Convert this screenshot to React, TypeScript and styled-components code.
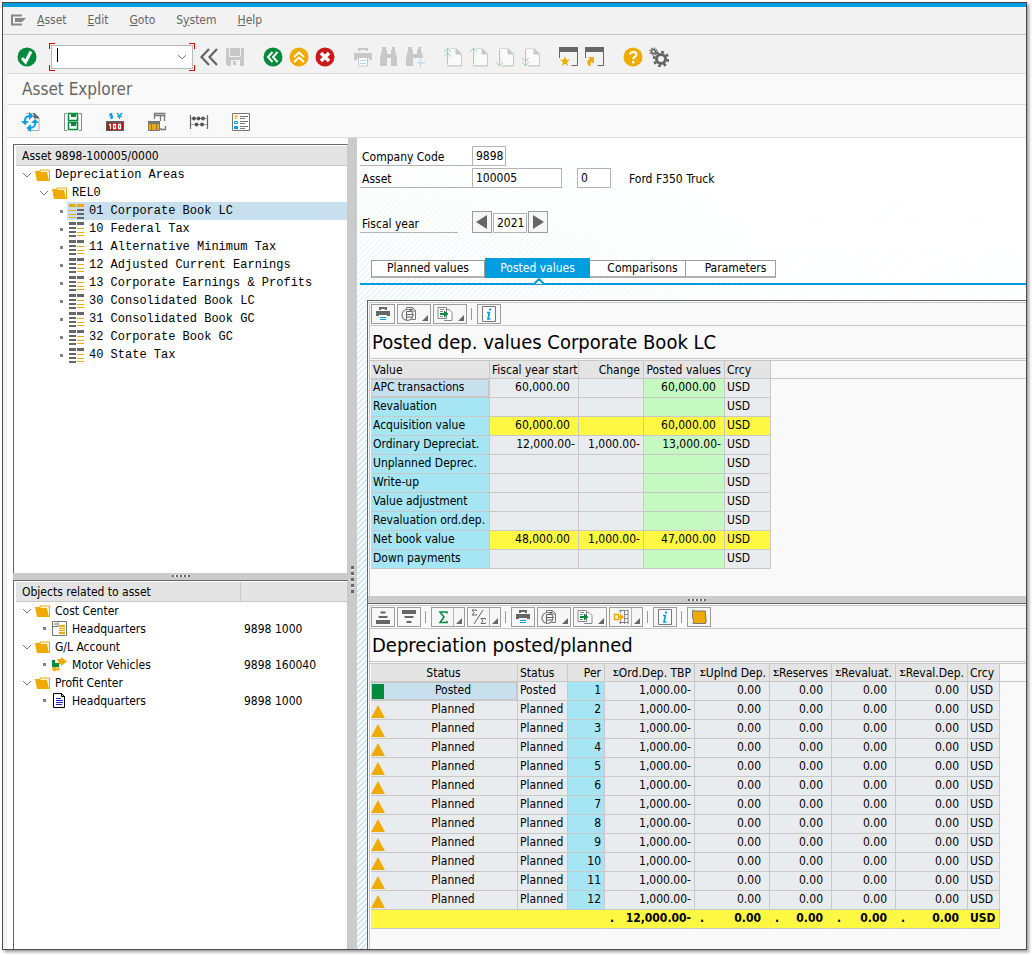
import React from 'react';
import styled, { createGlobalStyle, css } from 'styled-components';

const SANS = '"DejaVu Sans Condensed", "DejaVu Sans", Tahoma, sans-serif';
const MONO = '"Liberation Mono", "Courier New", monospace';
const BLUE = '#009de0';
const LINE = '#c8c8c8';
const DARK = '#666666';
const AMBER = '#f0ab00';
const GREEN = '#008a3b';

const GlobalStyle = createGlobalStyle`
  * { box-sizing: border-box; }
  body {
    margin: 0;
    background: #fff;
    color: #000;
    font-family: ${SANS};
    font-size: 12px;
    line-height: 16px;
  }
  button, input { font: inherit; color: inherit; margin: 0; padding: 0; border-radius: 0; }
  button { background: none; border: 0; }
  svg { display: block; flex: none; }
`;

/* ---------- window ---------- */

const Window = styled.div`
  display: flex;
  flex-direction: column;
  min-height: calc(100vh - 7px);
  margin: 0 5px 5px 2px;
  border: 1px solid #4a4a4a;
  background: #f2f2f2;
  box-shadow: 2px 2px 3px rgba(0, 0, 0, 0.4);
`;

const Page = styled.div`
  padding-top: 2px;
`;

const AccentStrip = styled.div`
  height: 4px;
  background: ${BLUE};
`;

const MenuBar = styled.nav`
  display: flex;
  align-items: center;
  height: 28px;
  padding: 0 0 2px 6px;
  border-bottom: 1px solid #c4c4c4;
  color: ${DARK};
`;

const MenuItems = styled.div`
  display: flex;
  gap: 21px;
  margin-left: 10px;
`;

const MenuItem = styled.button`
  line-height: 18px;
`;

const Body = styled.div`
  display: flex;
  flex-direction: column;
  flex: 1;
  margin-left: 4px;
  background: #fff;
`;

const SystemBar = styled.div`
  display: flex;
  align-items: center;
  gap: 4px;
  height: 39px;
  padding: 5px 0 0 10px;
  border-bottom: 1px solid #dcdcdc;
  background: #f2f2f2;
`;

const IconButton = styled.button`
  display: flex;
  align-items: center;
  justify-content: center;
  width: 20px;
  height: 20px;
`;

const Group = styled.div<{ $before?: number }>`
  display: flex;
  gap: 6px;
  margin-left: ${(p) => p.$before ?? 0}px;
`;

const corner = (pos: string) =>
  `linear-gradient(#e00000, #e00000) ${pos} / 6px 1px no-repeat, linear-gradient(#e00000, #e00000) ${pos} / 1px 6px no-repeat`;

const CommandFrame = styled.div`
  padding: 2px;
  margin: 0 0 0 8px;
  background: ${corner('left top')}, ${corner('right top')}, ${corner('left bottom')}, ${corner('right bottom')};
`;

const CommandBox = styled.div`
  display: flex;
  align-items: center;
  width: 142px;
  height: 24px;
  padding: 0 5px;
  border: 1px solid #b8b8b8;
  background: #fff;
`;

const Caret = styled.span`
  width: 1px;
  height: 14px;
  margin-bottom: 4px;
  background: #000;
`;

const CommandInput = styled.input`
  flex: 1;
  min-width: 0;
  border: 0;
  outline: 0;
  background: transparent;
`;

const TitleBar = styled.h1`
  height: 31px;
  margin: 0;
  padding-left: 15px;
  border-bottom: 1px solid #dcdcdc;
  background: #f9f9f9;
  color: ${DARK};
  font-size: 17px;
  font-weight: 400;
  line-height: 30px;
`;

const AppBar = styled.div`
  display: flex;
  align-items: center;
  gap: 22px;
  height: 33px;
  padding: 1px 0 0 14px;
  border-bottom: 1px solid #dcdcdc;
  background: #f9f9f9;
`;

/* ---------- split layout ---------- */

const Workspace = styled.main`
  display: flex;
  flex: 1;
`;

const LeftPane = styled.div`
  display: flex;
  flex-direction: column;
  flex: none;
  width: 341px;
  padding: 6px 0 0 6px;
`;

const TreePanel = styled.section<{ $grow: number }>`
  display: flex;
  flex-direction: column;
  flex: ${(p) => p.$grow} 1 auto;
  height: 0;
  border-top: 1px solid ${DARK};
  border-left: 1px solid ${DARK};
  border-right: 1px solid ${LINE};
  padding: 1px 0 0 2px;
`;

const TreeHeader = styled.div`
  display: grid;
  grid-template-columns: 225px 1fr;
  height: 20px;
  border-bottom: 1px solid ${LINE};
  background: #e4e4e4;
  line-height: 20px;
`;

const TreeHeaderCell = styled.h2<{ $span?: boolean }>`
  margin: 0;
  padding-left: 6px;
  font: inherit;
  ${(p) => p.$span ? 'grid-column: 1 / 3;' : `border-right: 1px solid ${LINE};`}
`;

const TreeList = styled.ul<{ $mono?: boolean }>`
  margin: 0;
  padding: 0;
  list-style: none;
  ${(p) => p.$mono && `font-family: ${MONO};`}
`;

const TreeRow = styled.li<{ $level: number }>`
  display: grid;
  grid-template-columns: ${(p) => 17 + p.$level * 17}px 1fr;
  height: 18px;
  line-height: 18px;
  white-space: nowrap;
`;

const TreeMarker = styled.span`
  display: flex;
  align-items: center;
  justify-content: flex-end;
  padding-right: 1px;
`;

const TreeBullet = styled.i`
  width: 3px;
  height: 3px;
  margin-right: 3px;
  background: #808080;
`;

const TreeItem = styled.span<{ $selected?: boolean; $indent: number }>`
  display: grid;
  grid-template-columns: ${(p) => 209 - p.$indent}px 1fr;
  padding-left: 2px;
  background: ${(p) => (p.$selected ? '#c8e0ed' : 'transparent')};
`;

const TreeText = styled.span`
  display: flex;
  align-items: center;
  gap: 5px;
`;

const Splitter = styled.div<{ $vertical?: boolean }>`
  display: flex;
  align-items: center;
  justify-content: center;
  flex: none;
  background: #cbcbcb;
  ${(p) => (p.$vertical ? 'width: 9px;' : 'height: 7px;')}
`;

const Grip = styled.span<{ $vertical?: boolean }>`
  ${(p) =>
    p.$vertical
      ? css`
          width: 3px;
          height: 27px;
          margin-top: 72px;
          background: repeating-linear-gradient(#666 0 3px, #eee 3px 4px, transparent 4px 6px);
        `
      : css`
          width: 18px;
          height: 2px;
          background: repeating-linear-gradient(to right, #666 0 2px, #eee 2px 4px);
        `}
`;

const RightPane = styled.div`
  display: flex;
  flex-direction: column;
  flex: 1;
  min-width: 0;
  background:
    linear-gradient(#fff, rgba(255, 255, 255, 0) 360px),
    linear-gradient(to right, rgba(255, 255, 255, 0), rgba(255, 255, 255, 0.9) 60%),
    repeating-linear-gradient(135deg, #cfe6f2 0 1px, #fff 2px 3px, #cfe6f2 4px);
`;

/* ---------- selection form ---------- */

const Form = styled.form`
  display: flex;
  flex-direction: column;
  gap: 2px;
  padding: 8px 0 0 3px;
`;

const FormRow = styled.div<{ $before?: number }>`
  display: flex;
  align-items: flex-end;
  margin-top: ${(p) => p.$before ?? 0}px;
`;

const FieldLabel = styled.label<{ $short?: boolean }>`
  width: ${(p) => (p.$short ? 98 : 112)}px;
  height: 18px;
  margin-right: ${(p) => (p.$short ? 14 : 0)}px;
  padding-left: 2px;
  border-bottom: 1px solid #b4b4b4;
  line-height: 18px;
`;

const Field = styled.input<{ $w: number; $before?: number }>`
  width: ${(p) => p.$w}px;
  height: 20px;
  margin-left: ${(p) => p.$before ?? 0}px;
  padding: 0 0 1px 3px;
  border: 1px solid #b4b4b4;
  background: #fff;
`;

const FieldText = styled.output`
  height: 20px;
  margin-left: 18px;
  line-height: 22px;
`;

const YearStepper = styled.div`
  display: flex;
  align-items: flex-end;
  gap: 1px;
`;

const StepButton = styled.button`
  display: flex;
  align-items: center;
  justify-content: center;
  width: 20px;
  height: 22px;
  border: 1px solid #9c9c9c;
  background: #f7f7f7;
`;

/* ---------- tabs ---------- */

const TabStrip = styled.div`
  display: flex;
  align-items: flex-end;
  height: 27px;
  margin: 25px 0 0 3px;
  padding: 0 0 5px 11px;
  border-bottom: 2px solid ${BLUE};
`;

const Tab = styled.button<{ $w: number; $active?: boolean; $late?: boolean }>`
  position: relative;
  width: ${(p) => p.$w}px;
  height: 18px;
  padding-left: ${(p) => (p.$late ? 10 : 0)}px;
  border: 1px solid #9c9c9c;
  border-bottom: 2px solid #b0b0b0;
  border-left-width: 0;
  background: #fff;
  line-height: 15px;
  &:first-child { border-left-width: 1px; }
  ${(p) =>
    p.$active &&
    css`
      height: 20px;
      border: 0;
      background: ${BLUE};
      color: #fff;
      line-height: 20px;
    `}
`;

const TabPointer = styled.svg`
  position: absolute;
  left: 48px;
  top: 20px;
`;

/* ---------- result grids ---------- */

const Results = styled.div`
  display: flex;
  flex-direction: column;
  flex: 1;
  margin: 15px 0 0 10px;
  border-left: 1px solid ${DARK};
`;

const GridPanel = styled.section<{ $fill?: boolean }>`
  display: flex;
  flex-direction: column;
  flex: ${(p) => (p.$fill ? '1' : 'none')};
  padding: ${(p) => (p.$fill ? '1px 0 16px 2px' : '1px 0 27px 2px')};
  border-top: 1px solid ${DARK};
  background: linear-gradient(${LINE}, ${LINE}) 1px 1px / 1px 100% no-repeat #f9f9f9;
`;

const GridToolbar = styled.div`
  display: flex;
  align-items: center;
  gap: 2px;
  height: 24px;
  padding-left: 1px;
  border-top: 1px solid ${LINE};
  border-bottom: 1px solid ${LINE};
`;

const ToolButton = styled.button<{ $menu?: boolean }>`
  display: flex;
  align-items: center;
  justify-content: center;
  width: 24px;
  height: 20px;
  border: 1px solid #9c9c9c;
  background: #f7f7f7;
  ${(p) =>
    p.$menu &&
    css`
      width: 34px;
      justify-content: space-between;
      padding: 0 2px 0 3px;
    `}
`;

const MenuPart = styled.span<{ $split?: boolean }>`
  display: flex;
  align-items: flex-end;
  justify-content: flex-end;
  width: 9px;
  height: 18px;
  padding-bottom: 2px;
  border-left: 1px solid ${(p) => (p.$split ? '#b4b4b4' : 'transparent')};
`;

const ToolDivider = styled.span`
  width: 6px;
  height: 12px;
  background: linear-gradient(#999, #999) 2px 0 / 1px 100% no-repeat;
`;

const GridTitle = styled.h2`
  height: 35px;
  margin: 0;
  padding-left: 2px;
  border-bottom: 3px double ${LINE};
  font-size: 20px;
  font-weight: 400;
  line-height: 32px;
`;

const GridArea = styled.div`
  padding-left: 1px;
  background: linear-gradient(${LINE}, ${LINE}) 0 17px / 100% 1px no-repeat;
`;

const Grid = styled.table<{ $w: number }>`
  width: ${(p) => p.$w}px;
  table-layout: fixed;
  border-collapse: separate;
  border-spacing: 0;
`;

const HeadCell = styled.th<{ $align?: 'left' | 'center' | 'right' }>`
  height: 18px;
  padding: 1px 3px 0 2px;
  border-right: 1px solid ${LINE};
  border-bottom: 1px solid ${LINE};
  background: #e4e4e4;
  font-weight: 400;
  line-height: 16px;
  text-align: ${(p) => p.$align ?? 'right'};
  white-space: nowrap;
`;

const SumMark = styled.small`
  font: bold 9px/9px "Liberation Serif", serif;
  vertical-align: 1px;
`;

type Tone = 'plain' | 'key' | 'focus' | 'good' | 'total';

const tones: Record<Tone, string> = {
  plain: '#e8ecef',
  key: '#a5e5f4',
  focus: '#c8e0ed',
  good: '#c6f8c1',
  total: '#fff843',
};

const Cell = styled.td<{ $tone?: Tone; $align?: 'left' | 'right'; $open?: boolean; $flush?: boolean }>`
  height: 19px;
  padding: 0 ${(p) => (p.$align === 'right' && !p.$flush ? 8 : 3)}px 2px 2px;
  border-right: 1px solid ${(p) => (p.$open ? 'transparent' : LINE)};
  border-bottom: 1px solid ${LINE};
  background: ${(p) => tones[p.$tone ?? 'plain']} border-box;
  line-height: 16px;
  text-align: ${(p) => p.$align ?? 'left'};
  white-space: nowrap;
  ${(p) => p.$tone === 'focus' && `box-shadow: inset 0 0 0 1px ${LINE};`}
`;

const StatusCell = styled(Cell)`
  padding: 0;
`;

const StatusInner = styled.div<{ $focus?: boolean }>`
  display: grid;
  grid-template-columns: 14px 1fr;
  align-items: end;
  height: 18px;
  ${(p) => p.$focus && `background: ${tones.focus}; box-shadow: inset 0 0 0 1px ${LINE};`}
`;

const StatusText = styled.span`
  padding: 0 0 2px 4px;
  text-align: center;
`;

const SumCell = styled.div`
  display: flex;
  justify-content: space-between;
  padding-left: 3px;
`;

const TotalRow = styled.tr`
  font-weight: 700;
`;

/* ---------- icons ---------- */

const Svg = ({ children, size = 20, color }: { children: React.ReactNode; size?: number; color?: string }) => (
  <svg width={size} height={size} viewBox={`0 0 ${size} ${size}`} fill="none" stroke={color ?? DARK} aria-hidden="true">
    {children}
  </svg>
);

const PALE = '#c8c8c8';

const MenuIcon = () => (
  <svg width="18" height="12" viewBox="0 0 18 12" aria-hidden="true">
    <path d="M13 10.500H3V1.500h10" fill="none" stroke="#888" strokeWidth="2" />
    <path d="M6 4h11l-4 4H6z" fill="#888" />
  </svg>
);

const CheckIcon = () => (
  <Svg>
    <circle cx="10" cy="10" r="9.5" fill={GREEN} stroke="none" />
    <path d="M5 11l3.500 4L14 4.500" stroke="#fff" strokeWidth="3" />
  </Svg>
);

const HistoryIcon = () => (
  <Svg>
    <path d="M10 2L2.500 10l7.500 8M18 2l-7.500 8 7.500 8" strokeWidth="2.200" />
  </Svg>
);

const SaveIcon = () => (
  <Svg>
    <path d="M1 1h18v18H3l-2-2z" fill={PALE} stroke="none" />
    <path d="M4.500 0v9.500h11V0" stroke="#f2f2f2" />
    <path d="M6 13h9v6H6z" fill="#f2f2f2" stroke="none" />
    <path d="M8 14h3v4H8z" fill={PALE} stroke="none" />
  </Svg>
);

const BackIcon = () => (
  <Svg>
    <circle cx="10" cy="10" r="9.500" fill={GREEN} stroke="none" />
    <path d="M9.500 5L5 10l4.500 5M14.500 5L10 10l4.500 5" stroke="#fff" strokeWidth="2" />
  </Svg>
);

const ExitIcon = () => (
  <Svg>
    <circle cx="10" cy="10" r="9.500" fill={AMBER} stroke="none" />
    <path d="M5 10l5-4.500 5 4.500M5 15l5-4.500 5 4.500" stroke="#fff" strokeWidth="2" />
  </Svg>
);

const CancelIcon = () => (
  <Svg>
    <circle cx="10" cy="10" r="9.500" fill="#cc1919" stroke="none" />
    <path d="M6 6l8 8M14 6l-8 8" stroke="#fff" strokeWidth="3.500" />
  </Svg>
);

const PrintIcon = () => (
  <Svg>
    <path d="M5 1h10v3h-2V3H7v1H5z" fill={PALE} stroke="none" />
    <path d="M1 6h18v7h-3v-2H4v2H1z" fill={PALE} stroke="none" />
    <path d="M5.500 11v8h9v-8" fill="#fff" stroke={PALE} />
    <path d="M7 13.500h6M7 16.500h6" stroke="#a8d8f0" />
  </Svg>
);

const Binoculars = ({ more }: { more?: boolean }) => (
  <Svg>
    <path d="M4 0h3v3h1v4h4V3h1V0h3v3l2 8v8h-6v-8H8v8H1v-8l2-8V0z" fill={PALE} stroke="none" />
    {more && (
      <>
        <path d="M11 11h9v9h-9z" fill="#f2f2f2" stroke="none" />
        <path d="M15.500 12v8M12 16h8" stroke="#a8d8f0" />
      </>
    )}
  </Svg>
);

const PageIcon = ({ down, double }: { down?: boolean; double?: boolean }) => (
  <Svg>
    <path d="M4.500 1.500h9l5 5v12h-14z" fill="#fafafa" stroke="#d8d8d8" />
    <path d="M18.500 7v12M4 19h15M13 2v5h5z" fill={PALE} stroke={PALE} />
    <path d="M1 1h6v10H1z" transform={down ? 'translate(0 9)' : undefined} fill="#f2f2f2" stroke="none" />
    {down ? (
      <path d={double ? 'M4.500 3v16M1 10.500l3.500 4L8 10.500M1 15l3.500 4L8 15' : 'M4.500 3v16M1 15l3.500 4L8 15'} stroke="#9ed3b6" />
    ) : (
      <path d={double ? 'M4.500 1v16M1 5l3.500-4L8 5M1 9.500l3.500-4L8 9.500' : 'M4.500 1v16M1 5l3.500-4L8 5'} stroke="#9ed3b6" />
    )}
  </Svg>
);

const SessionIcon = ({ shortcut }: { shortcut?: boolean }) => (
  <Svg>
    <path d="M.5 11V.500h18v18h-6" />
    <path d="M0 0h19v5H0z" fill={DARK} stroke="none" />
    {shortcut ? (
      <path d="M3 10h6v7l-2-2c-2 1-2 2-1 4H4c-3-3-2-6 1-7z" fill={AMBER} stroke="none" />
    ) : (
      <path d="M6 9l1.400 3.800H11l-3 2.500L9.200 19 6 16.800 2.800 19 4 15.300l-3-2.500h3.600z" fill={AMBER} stroke="none" />
    )}
  </Svg>
);

const HelpIcon = () => (
  <Svg>
    <circle cx="10" cy="10" r="9.500" fill={AMBER} stroke="none" />
    <path d="M7 7.500c0-3.500 6.500-3.200 6.500 0 0 2.200-3.300 2-3.300 4.700" stroke="#fff" strokeWidth="2" />
    <path d="M9 14h2.400v2.400H9z" fill="#fff" stroke="none" />
  </Svg>
);

const GearIcon = () => (
  <Svg>
    <circle cx="12" cy="12" r="4.500" strokeWidth="3" />
    <circle cx="12" cy="12" r="7" strokeWidth="2.600" strokeDasharray="2.800 2.700" />
    <circle cx="4.500" cy="4.500" r="2" strokeWidth="1.600" />
    <circle cx="4.500" cy="4.500" r="3.500" strokeWidth="1.300" strokeDasharray="1.400 1.350" />
  </Svg>
);

const SwitchIcon = () => (
  <Svg>
    <path d="M5.500 1.500h8l4.500 4v13H6.500" fill="#fafafa" stroke="#aaa" />
    <path d="M13 1v5h5z" fill={DARK} stroke={DARK} />
    <path d="M4 11c-1-4 1-7 5-7M14 9c1 4-1 7-5 7" stroke={BLUE} strokeWidth="2" />
    <path d="M8 0l4.500 4L8 8zM10 12l-4.500 4 4.500 4zM0 9h8l-4 4zM10 11h8l-4-4z" fill={BLUE} stroke="none" />
  </Svg>
);

const SaveAllIcon = () => (
  <Svg>
    <path d="M4 1.500H1.500v17H4M16 1.500h2.500v17H16" stroke="#888" />
    <path d="M5.500 1.500h9v7h-9zM5.500 10.500h9v7h-9z" fill="#fff" stroke={GREEN} strokeWidth="1.500" />
    <path d="M8 1h5v4H8zM8 10h5v4H8z" fill={GREEN} stroke="none" />
  </Svg>
);

const CurrencyIcon = () => (
  <Svg>
    <path d="M1 9h18v10H1z" fill="#5a5a5a" stroke="none" />
    <path d="M2 11h16v7H2z" fill="#b91515" stroke="none" />
    <path d="M5.500 12v5M4 13l1.500-1M8.500 12.500h2v4h-2zM13.500 12.500h2v4h-2z" stroke="#fff" strokeWidth="1.300" />
    <path d="M7.500 2H5v2h2.500v2H5M6.300 1v6M12 1l2.500 3L17 1M14.500 4v3M12 4.500h5" stroke={BLUE} strokeWidth="1.200" />
  </Svg>
);

const TransferIcon = () => (
  <Svg>
    <path d="M7 1.500h11.500M7 3.500h11.500M7.500 1v6M13.500 4v5M17.500 4v5M14 16v1.500h4.500V14" stroke="#777" strokeWidth="1.300" />
    <path d="M1.500 9.500h11v9h-11z" fill={AMBER} stroke="#777" />
    <path d="M4.500 11v8M9.500 11v8" stroke="#777" />
    <path d="M1 9h12v3H1z" fill="#777" stroke="none" />
  </Svg>
);

const AbacusIcon = () => (
  <Svg>
    <path d="M1.500 3v14M18.500 3v14" strokeWidth="1.200" />
    <path d="M2 6.500h16M2 12.500h16" stroke="#999" />
    <g fill="#555" stroke="none">
      <circle cx="5" cy="6.500" r="1.900" />
      <circle cx="9.500" cy="6.500" r="1.900" />
      <circle cx="14" cy="6.500" r="1.900" />
      <circle cx="7.500" cy="12.500" r="1.900" />
      <circle cx="13" cy="12.500" r="1.900" />
    </g>
  </Svg>
);

const LegendIcon = () => (
  <Svg>
    <path d="M1.500 1.500h17v17h-17z" fill="#fff" stroke="#777" />
    <path d="M9 4.500h8M9 6.500h5M9 9.500h8M9 11.500h5M9 14.500h8M9 16.500h5" stroke="#777" />
    <path d="M3.500 3.500l3 3M6.500 3.500l-3 3" stroke={AMBER} strokeWidth="1.300" />
    <path d="M3.500 9.500h3v2h-3z" stroke={BLUE} />
    <path d="M3 14h4v3H3z" fill={BLUE} stroke="none" />
  </Svg>
);

const FolderIcon = () => (
  <svg width="15" height="14" viewBox="0 0 15 14" aria-hidden="true">
    <path d="M5 3.500V2h9.500v11" fill="#fff8e0" stroke={AMBER} />
    <path d="M0 3h5l1 1h6l2 9H2z" fill={AMBER} />
  </svg>
);

const AreaIcon = ({ active }: { active?: boolean }) => {
  const left = active ? AMBER : DARK;
  const right = active ? DARK : AMBER;
  return (
    <svg width="15" height="16" viewBox="0 0 15 16" aria-hidden="true">
      <path d="M0 2.500h7M8 2.500h7" stroke={left} strokeWidth="3" />
      <path d={active ? 'M0 7.500h7M0 11.500h7M0 14.500h7' : 'M0 7h7M0 11h7M0 15h7'} stroke={left} strokeWidth={active ? 1 : 2} />
      <path d={active ? 'M8 7h7M8 11h7M8 15h7' : 'M8 7.500h7M8 11.500h7M8 14.500h7'} stroke={right} strokeWidth={active ? 2 : 1} />
    </svg>
  );
};

const CostCenterIcon = () => (
  <svg width="15" height="15" viewBox="0 0 15 15" fill="none" aria-hidden="true">
    <path d="M.5.500h14v14H.5zM.5 5.500H6v-5M2 3h3" stroke="#777" />
    <path d="M7 4h6v9H7z" fill={AMBER} />
    <path d="M7 6.500h6M7 8.500h6M7 10.500h6" stroke="#fff3cc" />
  </svg>
);

const AccountIcon = () => (
  <svg width="15" height="15" viewBox="0 0 15 15" aria-hidden="true">
    <path d="M0 3h3v3h4v4H0z" fill={GREEN} />
    <path d="M5 2h4V0l6 4.500L9 9V7H7z" fill={AMBER} />
    <circle cx="2.500" cy="12" r="2.300" fill={AMBER} />
    <circle cx="6" cy="12" r="1.700" fill={AMBER} />
  </svg>
);

const DocumentIcon = () => (
  <svg width="15" height="15" viewBox="0 0 15 15" fill="none" stroke="#000" aria-hidden="true">
    <path d="M1.500.500h8l3 3v11h-11zM9.500.500v3h3" fill="#fff" />
    <path d="M4 5.500h5M4 7.500h7M4 9.500h7M4 11.500h6" stroke="#2020c0" />
  </svg>
);

const ChevronIcon = () => (
  <svg width="10" height="6" viewBox="0 0 10 6" fill="none" stroke="#777" aria-hidden="true">
    <path d="M1 1l4 4 4-4" />
  </svg>
);

const ArrowIcon = ({ right }: { right?: boolean }) => (
  <svg width="12" height="14" viewBox="0 0 12 14" fill={DARK} aria-hidden="true">
    <path d={right ? 'M1 0v14l11-7z' : 'M11 0v14L0 7z'} />
  </svg>
);

const MenuCorner = () => (
  <svg width="6" height="6" viewBox="0 0 6 6" fill={DARK} aria-hidden="true">
    <path d="M6 0v6H0z" />
  </svg>
);

const PrintSmall = () => (
  <Svg size={16}>
    <path d="M4 1h8v3h-2V3H6v1H4z" fill={DARK} stroke="none" />
    <path d="M1 5h14v5h-3V9H4v1H1z" fill={DARK} stroke="none" />
    <path d="M4 10h8v5H4z" fill="#fff" stroke="none" />
    <path d="M5 11.500h6M5 13.500h6" stroke={BLUE} />
  </Svg>
);

const ViewIcon = () => (
  <Svg size={16}>
    <path d="M5.500 4V1.500h6l3 3v9h-4M11 1v4h4" fill="none" stroke="#777" />
    <circle cx="6.500" cy="9" r="5.500" stroke="#777" strokeWidth="1.200" />
    <path d="M5.500 14V5.500h5M5.500 8.500h7M5.500 11h6M8 3.500h3" stroke="#666" />
  </Svg>
);

const ExportIcon = () => (
  <Svg size={16}>
    <path d="M9.500 3.500h2.500l3 3v8H7" fill="#fff" stroke="#888" />
    <path d="M1 1.500h8.500v11H1z" fill="#fff" stroke="#888" />
    <path d="M3 3.500h4M3 5.500h3M3 10.500h3" stroke="#888" />
    <path d="M3 7h4V4.500L11.500 8 7 11.500V9H3z" fill={GREEN} stroke="none" />
  </Svg>
);

const LayoutIcon = () => (
  <Svg size={16}>
    <path d="M6 1.500h9.500M7.500 1v3M11.500 1v14M15 1v14M11 5.500h4M11 9.500h4M6 13.500h9.500M7.500 11v4" stroke="#888" />
    <path d="M1.500 5.500h4v5h-4zM5 8h4" stroke={AMBER} strokeWidth="1.500" />
    <path d="M7 4.500L11 8l-4 3.500z" fill={AMBER} stroke="none" />
  </Svg>
);

const InfoIcon = () => (
  <Svg size={16}>
    <path d="M1.500.500h13v15h-13z" fill="#fff" stroke="#777" />
    <path d="M8.500 6l-1.500 7h2.500M6 6.500h3" stroke={BLUE} strokeWidth="1.700" />
    <path d="M8 2.500h2.200v2H8z" fill={BLUE} stroke="none" />
  </Svg>
);

const SortIcon = ({ down }: { down?: boolean }) => (
  <Svg size={16}>
    <path d={down ? 'M1 3h14' : 'M1 13h14'} strokeWidth="4" />
    <path d="M3.500 8h9" strokeWidth="2" />
    <path d={down ? 'M5.500 13h5' : 'M5.500 3.500h5'} strokeWidth="2" />
  </Svg>
);

const SumIcon = () => (
  <Svg size={16} color={GREEN}>
    <path d="M12 4.500V3H5l4 5-4 5.500h7V12" strokeWidth="1.500" />
  </Svg>
);

const SubtotalIcon = () => (
  <Svg size={16}>
    <path d="M5.500 2V1H1l2 2.500L1 6h4.500V5M14.500 10.500v-1H10l2 2.500-2 2.500h4.500v-1M12 1L3 15" />
  </Svg>
);

const ScrollIcon = () => (
  <Svg size={16}>
    <path d="M1.500 1.500l1-.5 1 1h11v4l.5 3v5l-1 .5H2l.5-3-1-3z" fill={AMBER} stroke="#777" />
  </Svg>
);

const StatusIcon = ({ posted }: { posted?: boolean }) => (
  <svg width="14" height="16" viewBox="0 0 14 16" aria-hidden="true">
    {posted ? <path d="M1 0h12v15H1z" fill={GREEN} /> : <path d="M7 2l7 13H0z" fill={AMBER} />}
  </svg>
);

/* ---------- data ---------- */

const menus = ['Asset', 'Edit', 'Goto', 'System', 'Help'];

const areas = [
  '01 Corporate Book LC',
  '10 Federal Tax',
  '11 Alternative Minimum Tax',
  '12 Adjusted Current Earnings',
  '13 Corporate Earnings & Profits',
  '30 Consolidated Book LC',
  '31 Consolidated Book GC',
  '32 Corporate Book GC',
  '40 State Tax',
];

const related = [
  { group: 'Cost Center', name: 'Headquarters', key: '9898 1000', icon: <CostCenterIcon /> },
  { group: 'G/L Account', name: 'Motor Vehicles', key: '9898 160040', icon: <AccountIcon /> },
  { group: 'Profit Center', name: 'Headquarters', key: '9898 1000', icon: <DocumentIcon /> },
];

const values: { label: string; start?: string; change?: string; posted?: string; total?: boolean }[] = [
  { label: 'APC transactions', start: '60,000.00', posted: '60,000.00' },
  { label: 'Revaluation' },
  { label: 'Acquisition value', start: '60,000.00', posted: '60,000.00', total: true },
  { label: 'Ordinary Depreciat.', start: '12,000.00-', change: '1,000.00-', posted: '13,000.00-' },
  { label: 'Unplanned Deprec.' },
  { label: 'Write-up' },
  { label: 'Value adjustment' },
  { label: 'Revaluation ord.dep.' },
  { label: 'Net book value', start: '48,000.00', change: '1,000.00-', posted: '47,000.00', total: true },
  { label: 'Down payments' },
];

const periods = Array.from({ length: 12 }, (_, i) => i + 1);
const sumColumns = ['Ord.Dep. TBP', 'Uplnd Dep.', 'Reserves', 'Revaluat.', 'Reval.Dep.'];
const amounts = ['1,000.00-', '0.00', '0.00', '0.00', '0.00'];
const totals = ['12,000.00-', '0.00', '0.00', '0.00', '0.00'];

/* ---------- composed parts ---------- */

const TreeNode = ({
  level,
  icon,
  text,
  extra,
  leaf,
  selected,
}: {
  level: number;
  icon: React.ReactNode;
  text: string;
  extra?: string;
  leaf?: boolean;
  selected?: boolean;
}) => (
  <TreeRow $level={level}>
    <TreeMarker>{leaf ? <TreeBullet /> : <ChevronIcon />}</TreeMarker>
    <TreeItem $selected={selected} $indent={level * 17}>
      <TreeText>
        {icon}
        {text}
      </TreeText>
      <span>{extra}</span>
    </TreeItem>
  </TreeRow>
);

const MenuTool = ({ label, icon, split }: { label: string; icon: React.ReactNode; split?: boolean }) => (
  <ToolButton type="button" $menu aria-label={label}>
    {icon}
    <MenuPart $split={split}>
      <MenuCorner />
    </MenuPart>
  </ToolButton>
);

const Tool = ({ label, children }: { label: string; children: React.ReactNode }) => (
  <ToolButton type="button" aria-label={label}>
    {children}
  </ToolButton>
);

const BarIcon = ({ label, children }: { label: string; children: React.ReactNode }) => (
  <IconButton type="button" aria-label={label}>
    {children}
  </IconButton>
);

const Amount = ({ text, tone, open }: { text?: string; tone?: Tone; open?: boolean }) => (
  <Cell $align="right" $tone={tone} $open={open} $flush={text?.endsWith('-')}>
    {text}
  </Cell>
);

const Cols = ({ widths }: { widths: number[] }) => (
  <colgroup>
    {widths.map((w, i) => (
      <col key={i} width={w} />
    ))}
  </colgroup>
);

export default function App() {
  return (
    <Page>
      <GlobalStyle />
      <Window>
        <AccentStrip />
        <MenuBar>
          <MenuIcon />
          <MenuItems>
            {menus.map((m) => {
              const at = m === 'System' ? 1 : 0;
              return (
                <MenuItem type="button" key={m}>
                  {m.slice(0, at)}
                  <u>{m[at]}</u>
                  {m.slice(at + 1)}
                </MenuItem>
              );
            })}
          </MenuItems>
        </MenuBar>
        <Body>
          <SystemBar>
            <BarIcon label="Enter"><CheckIcon /></BarIcon>
            <CommandFrame>
              <CommandBox>
                <Caret />
                <CommandInput aria-label="Command" />
                <button type="button" aria-label="Command list"><ChevronIcon /></button>
              </CommandBox>
            </CommandFrame>
            <Group>
              <BarIcon label="Hide command field"><HistoryIcon /></BarIcon>
              <BarIcon label="Save"><SaveIcon /></BarIcon>
            </Group>
            <Group $before={14}>
              <BarIcon label="Back"><BackIcon /></BarIcon>
              <BarIcon label="Exit"><ExitIcon /></BarIcon>
              <BarIcon label="Cancel"><CancelIcon /></BarIcon>
            </Group>
            <Group $before={14}>
              <BarIcon label="Print"><PrintIcon /></BarIcon>
              <BarIcon label="Find"><Binoculars /></BarIcon>
              <BarIcon label="Find next"><Binoculars more /></BarIcon>
            </Group>
            <Group $before={14}>
              <BarIcon label="First page"><PageIcon double /></BarIcon>
              <BarIcon label="Previous page"><PageIcon /></BarIcon>
              <BarIcon label="Next page"><PageIcon down /></BarIcon>
              <BarIcon label="Last page"><PageIcon down double /></BarIcon>
            </Group>
            <Group $before={14}>
              <BarIcon label="New session"><SessionIcon /></BarIcon>
              <BarIcon label="Create shortcut"><SessionIcon shortcut /></BarIcon>
            </Group>
            <Group $before={14}>
              <BarIcon label="Help"><HelpIcon /></BarIcon>
              <BarIcon label="Customize layout"><GearIcon /></BarIcon>
            </Group>
          </SystemBar>
          <TitleBar>Asset Explorer</TitleBar>
          <AppBar>
            <BarIcon label="Switch"><SwitchIcon /></BarIcon>
            <BarIcon label="Select asset"><SaveAllIcon /></BarIcon>
            <BarIcon label="Currency"><CurrencyIcon /></BarIcon>
            <BarIcon label="Transfer"><TransferIcon /></BarIcon>
            <BarIcon label="Recalculate"><AbacusIcon /></BarIcon>
            <BarIcon label="Legend"><LegendIcon /></BarIcon>
          </AppBar>
          <Workspace>
            <LeftPane>
              <TreePanel $grow={429}>
                <TreeHeader>
                  <TreeHeaderCell $span>Asset 9898-100005/0000</TreeHeaderCell>
                </TreeHeader>
                <TreeList $mono>
                  <TreeNode level={0} icon={<FolderIcon />} text="Depreciation Areas" />
                  <TreeNode level={1} icon={<FolderIcon />} text="REL0" />
                  {areas.map((a, i) => (
                    <TreeNode key={a} level={2} leaf selected={i === 0} icon={<AreaIcon active={i === 0} />} text={a} />
                  ))}
                </TreeList>
              </TreePanel>
              <Splitter><Grip /></Splitter>
              <TreePanel $grow={369}>
                <TreeHeader>
                  <TreeHeaderCell>Objects related to asset</TreeHeaderCell>
                </TreeHeader>
                <TreeList>
                  {related.map((r) => (
                    <React.Fragment key={r.group}>
                      <TreeNode level={0} icon={<FolderIcon />} text={r.group} />
                      <TreeNode level={1} leaf icon={r.icon} text={r.name} extra={r.key} />
                    </React.Fragment>
                  ))}
                </TreeList>
              </TreePanel>
            </LeftPane>
            <Splitter $vertical><Grip $vertical /></Splitter>
            <RightPane>
              <Form>
                <FormRow>
                  <FieldLabel htmlFor="company">Company Code</FieldLabel>
                  <Field id="company" $w={34} defaultValue="9898" />
                </FormRow>
                <FormRow>
                  <FieldLabel htmlFor="asset">Asset</FieldLabel>
                  <Field id="asset" $w={90} defaultValue="100005" />
                  <Field $w={34} $before={15} defaultValue="0" aria-label="Asset subnumber" />
                  <FieldText>Ford F350 Truck</FieldText>
                </FormRow>
                <FormRow $before={21}>
                  <FieldLabel $short htmlFor="year">Fiscal year</FieldLabel>
                  <YearStepper>
                    <StepButton type="button" aria-label="Previous year"><ArrowIcon /></StepButton>
                    <Field id="year" $w={34} defaultValue="2021" />
                    <StepButton type="button" aria-label="Next year"><ArrowIcon right /></StepButton>
                  </YearStepper>
                </FormRow>
              </Form>
              <TabStrip>
                <Tab type="button" $w={114}>Planned values</Tab>
                <Tab type="button" $w={105} $active>
                  Posted values
                  <TabPointer width="12" height="7" viewBox="0 0 12 7" fill="#fff" stroke={BLUE} strokeWidth="2">
                    <path d="M0 6h1l5-5 5 5h1" />
                  </TabPointer>
                </Tab>
                <Tab type="button" $w={96} $late>Comparisons</Tab>
                <Tab type="button" $w={90} $late>Parameters</Tab>
              </TabStrip>
              <Results>
                <GridPanel>
                  <GridToolbar>
                    <Tool label="Print"><PrintSmall /></Tool>
                    <MenuTool label="Views" icon={<ViewIcon />} />
                    <MenuTool label="Export" icon={<ExportIcon />} />
                    <ToolDivider />
                    <Tool label="Information"><InfoIcon /></Tool>
                  </GridToolbar>
                  <GridTitle>Posted dep. values Corporate Book LC</GridTitle>
                  <GridArea>
                    <Grid $w={400}>
                      <Cols widths={[119, 89, 65, 81, 46]} />
                      <thead>
                        <tr>
                          <HeadCell $align="left">Value</HeadCell>
                          <HeadCell>Fiscal year start</HeadCell>
                          <HeadCell>Change</HeadCell>
                          <HeadCell>Posted values</HeadCell>
                          <HeadCell $align="left">Crcy</HeadCell>
                        </tr>
                      </thead>
                      <tbody>
                        {values.map((v, i) => {
                          const tone: Tone = v.total ? 'total' : 'plain';
                          return (
                            <tr key={v.label}>
                              <Cell $tone={i === 0 ? 'focus' : 'key'}>{v.label}</Cell>
                              <Amount text={v.start} tone={tone} />
                              <Amount text={v.change} tone={tone} />
                              <Amount text={v.posted} tone={v.total ? 'total' : 'good'} />
                              <Cell $tone={tone}>USD</Cell>
                            </tr>
                          );
                        })}
                      </tbody>
                    </Grid>
                  </GridArea>
                </GridPanel>
                <Splitter><Grip /></Splitter>
                <GridPanel $fill>
                  <GridToolbar>
                    <Tool label="Sort ascending"><SortIcon /></Tool>
                    <Tool label="Sort descending"><SortIcon down /></Tool>
                    <ToolDivider />
                    <MenuTool label="Total" icon={<SumIcon />} split />
                    <MenuTool label="Subtotals" icon={<SubtotalIcon />} split />
                    <ToolDivider />
                    <Tool label="Print"><PrintSmall /></Tool>
                    <MenuTool label="Views" icon={<ViewIcon />} />
                    <MenuTool label="Export" icon={<ExportIcon />} />
                    <MenuTool label="Layout" icon={<LayoutIcon />} split />
                    <ToolDivider />
                    <Tool label="Information"><InfoIcon /></Tool>
                    <ToolDivider />
                    <Tool label="Display document"><ScrollIcon /></Tool>
                  </GridToolbar>
                  <GridTitle>Depreciation posted/planned</GridTitle>
                  <GridArea>
                    <Grid $w={629}>
                      <Cols widths={[147, 50, 37, 90, 75, 62, 64, 72, 32]} />
                      <thead>
                        <tr>
                          <HeadCell $align="center">Status</HeadCell>
                          <HeadCell $align="left">Status</HeadCell>
                          <HeadCell>Per</HeadCell>
                          {sumColumns.map((c) => (
                            <HeadCell key={c}><SumMark>Σ</SumMark>{c}</HeadCell>
                          ))}
                          <HeadCell $align="left">Crcy</HeadCell>
                        </tr>
                      </thead>
                      <tbody>
                        {periods.map((n) => {
                          const status = n === 1 ? 'Posted' : 'Planned';
                          return (
                            <tr key={n}>
                              <StatusCell>
                                <StatusInner $focus={n === 1}>
                                  <StatusIcon posted={n === 1} />
                                  <StatusText>{status}</StatusText>
                                </StatusInner>
                              </StatusCell>
                              <Cell>{status}</Cell>
                              <Cell $tone="key" $align="right" $flush>{n}</Cell>
                              {amounts.map((a, i) => (
                                <Amount key={i} text={a} />
                              ))}
                              <Cell>USD</Cell>
                            </tr>
                          );
                        })}
                      </tbody>
                      <tfoot>
                        <TotalRow>
                          <Cell colSpan={3} $tone="total" $open />
                          {totals.map((t, i) => (
                            <Cell key={i} $tone="total" $open $align="right" $flush={t.endsWith('-')}>
                              <SumCell><span>.</span><span>{t}</span></SumCell>
                            </Cell>
                          ))}
                          <Cell $tone="total">USD</Cell>
                        </TotalRow>
                      </tfoot>
                    </Grid>
                  </GridArea>
                </GridPanel>
              </Results>
            </RightPane>
          </Workspace>
        </Body>
      </Window>
    </Page>
  );
}
